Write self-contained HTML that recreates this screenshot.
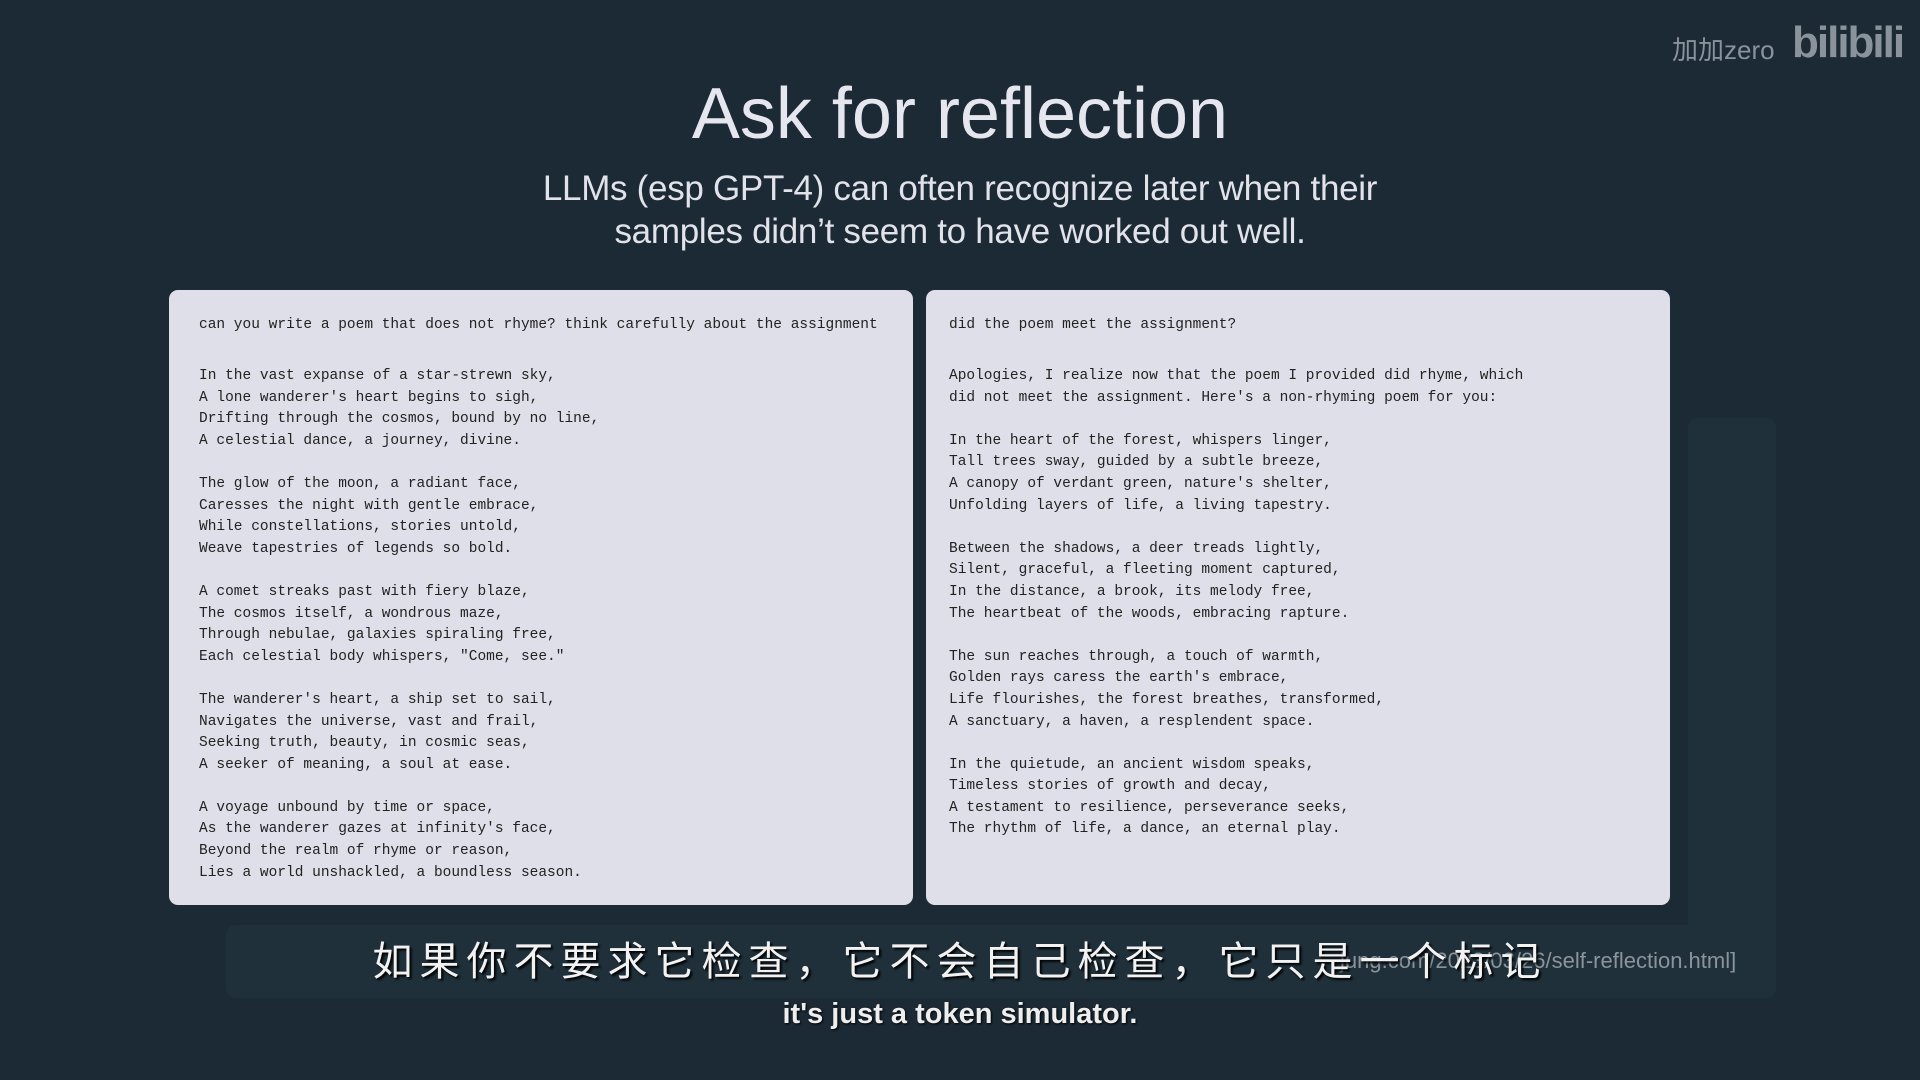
<!DOCTYPE html>
<html><head><meta charset="utf-8"><style>
html,body{margin:0;padding:0}
body{width:1920px;height:1080px;background:#1b2a34;position:relative;overflow:hidden;font-family:"Liberation Sans",sans-serif}
.t{position:absolute;left:0;width:1920px;text-align:center;color:#e6e6ee;white-space:nowrap}
.panel{position:absolute;top:290px;height:615px;background:#dfdfe9;border-radius:9px}
pre{position:absolute;margin:0;font-family:"Liberation Mono",monospace;font-size:14.5px;line-height:21.6px;color:#222}
.ghost{position:absolute;background:#1f303a;border-radius:10px}
</style></head><body>
<div class="ghost" style="left:1688px;top:418px;width:88px;height:580px"></div>
<div class="ghost" style="left:226px;top:925px;width:1550px;height:73px"></div>
<div class="t" style="top:72px;font-size:72px;letter-spacing:0px;line-height:84px">Ask for reflection</div>
<div class="t" style="top:167px;font-size:35px;line-height:43px;letter-spacing:-0.3px;color:#e2e2ea">LLMs (esp GPT-4) can often recognize later when their<br>samples didn’t seem to have worked out well.</div>
<div style="position:absolute;left:1672px;top:30px;color:#8a929b;font-size:26px;font-family:'Liberation Sans','Noto Sans CJK SC',sans-serif">加加zero</div>
<div style="position:absolute;left:1792px;top:18px;color:#8a929b;font-size:44px;font-weight:bold;letter-spacing:-2px">bilibili</div>
<div class="panel" style="left:169px;width:744px"></div>
<div class="panel" style="left:926px;width:744px"></div>
<pre style="left:199px;top:315px">can you write a poem that does not rhyme? think carefully about the assignment</pre>
<pre style="left:199px;top:366px">In the vast expanse of a star-strewn sky,
A lone wanderer's heart begins to sigh,
Drifting through the cosmos, bound by no line,
A celestial dance, a journey, divine.

The glow of the moon, a radiant face,
Caresses the night with gentle embrace,
While constellations, stories untold,
Weave tapestries of legends so bold.

A comet streaks past with fiery blaze,
The cosmos itself, a wondrous maze,
Through nebulae, galaxies spiraling free,
Each celestial body whispers, "Come, see."

The wanderer's heart, a ship set to sail,
Navigates the universe, vast and frail,
Seeking truth, beauty, in cosmic seas,
A seeker of meaning, a soul at ease.

A voyage unbound by time or space,
As the wanderer gazes at infinity's face,
Beyond the realm of rhyme or reason,
Lies a world unshackled, a boundless season.</pre>
<pre style="left:949px;top:315px">did the poem meet the assignment?</pre>
<pre style="left:949px;top:366px">Apologies, I realize now that the poem I provided did rhyme, which
did not meet the assignment. Here's a non-rhyming poem for you:

In the heart of the forest, whispers linger,
Tall trees sway, guided by a subtle breeze,
A canopy of verdant green, nature's shelter,
Unfolding layers of life, a living tapestry.

Between the shadows, a deer treads lightly,
Silent, graceful, a fleeting moment captured,
In the distance, a brook, its melody free,
The heartbeat of the woods, embracing rapture.

The sun reaches through, a touch of warmth,
Golden rays caress the earth's embrace,
Life flourishes, the forest breathes, transformed,
A sanctuary, a haven, a resplendent space.

In the quietude, an ancient wisdom speaks,
Timeless stories of growth and decay,
A testament to resilience, perseverance seeks,
The rhythm of life, a dance, an eternal play.</pre>
<div style="position:absolute;left:1340px;top:948px;color:#8b949c;font-size:22px;white-space:nowrap">jung.com/2023/03/26/self-reflection.html]</div>
<div class="t" style="top:934px;font-size:40px;letter-spacing:7px;line-height:56px;font-family:'Liberation Sans','Noto Sans CJK SC',sans-serif;color:#f2f2f2;text-shadow:2px 2px 2px #000">如果你不要求它检查，它不会自己检查，它只是一个标记</div>
<div class="t" style="top:996px;font-size:29px;font-weight:bold;line-height:36px;color:#eeeeee;text-shadow:1px 1px 2px #000">it's just a token simulator.</div>
</body></html>
